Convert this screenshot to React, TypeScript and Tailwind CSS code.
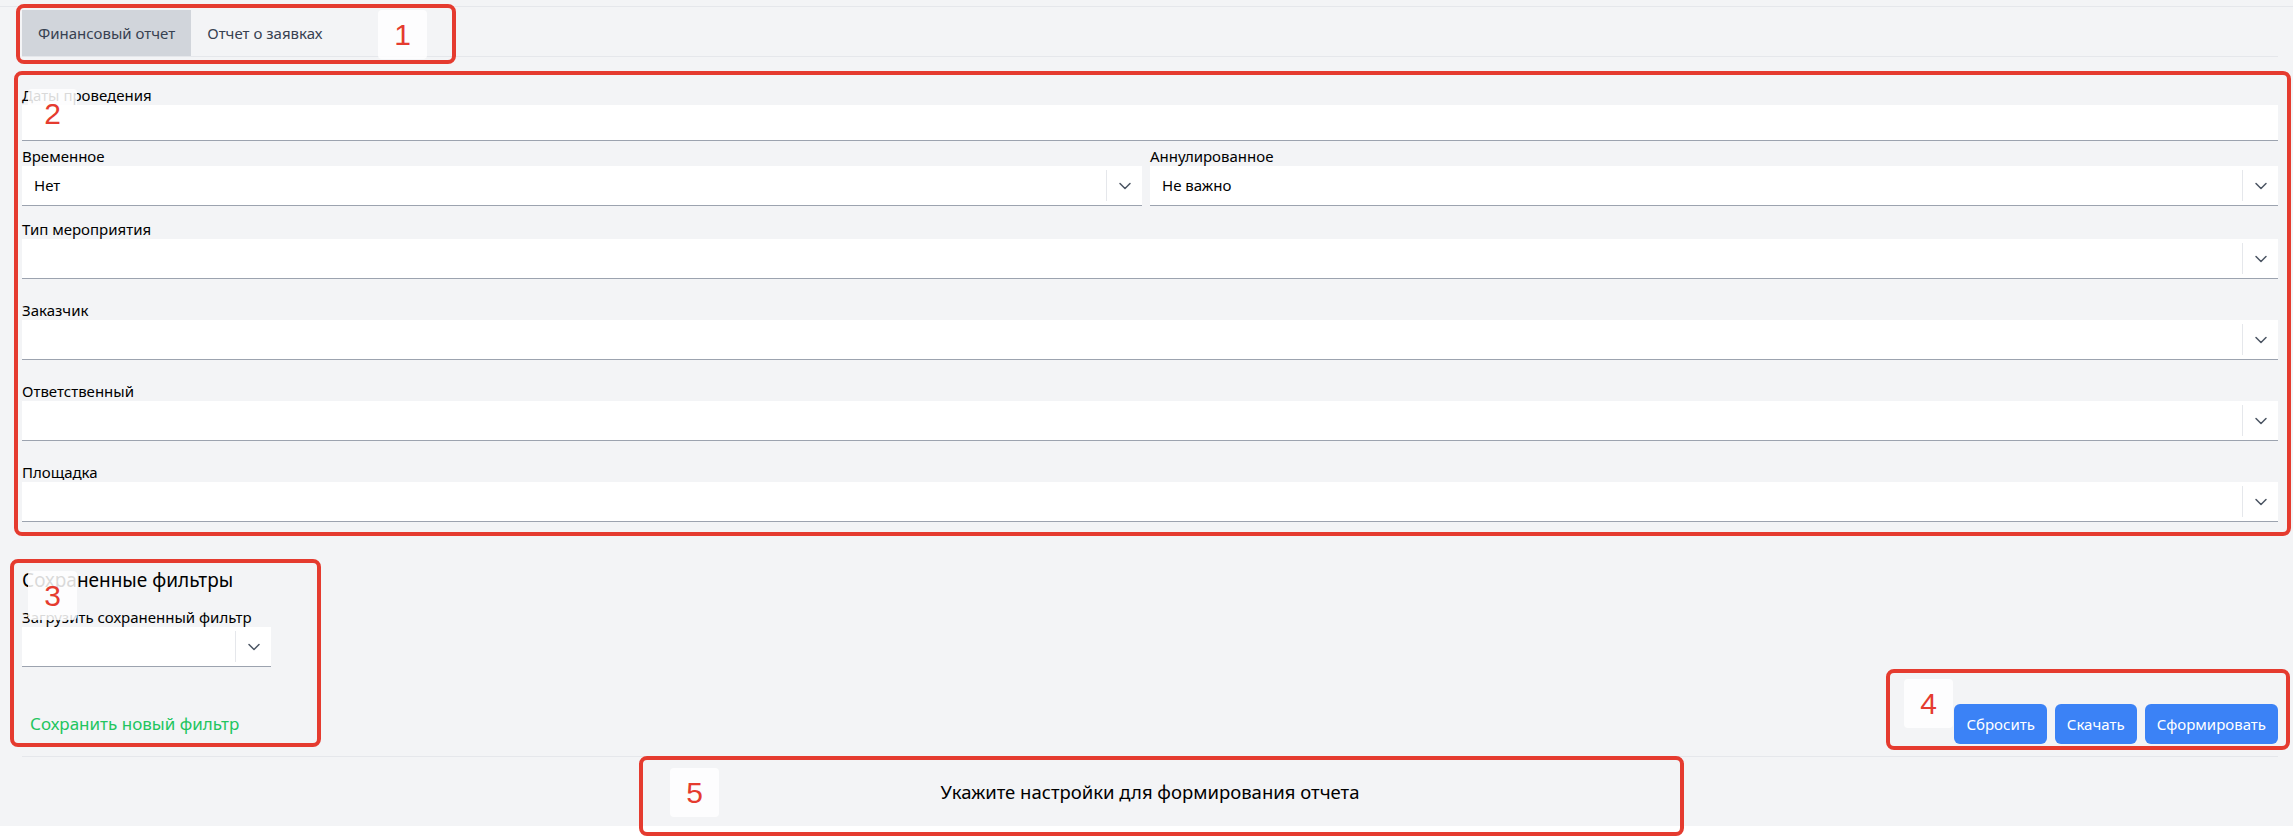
import React from 'react';
import { ChevronDown } from 'lucide-react';

const Select = ({ value, className = '' }: { value?: string; className?: string }) => (
  <div className={`h-10 bg-white border-b border-[#9ca3af] flex items-stretch ${className}`}>
    <div className="flex-1 flex items-center px-3 text-[15px] text-black truncate">{value}</div>
    <div className="flex items-center py-1">
      <div className="w-px h-full bg-[#e5e7eb]" />
    </div>
    <div className="w-[35px] flex items-center justify-center text-[#4b5563]">
      <ChevronDown size={20} strokeWidth={1.8} />
    </div>
  </div>
);

const Label = ({ children }: { children: React.ReactNode }) => (
  <div className="h-5 leading-5 text-[15px] text-black">{children}</div>
);

const Marker = ({ n, className }: { n: string; className: string }) => (
  <div
    className={`absolute w-[49px] h-[49px] bg-white/85 rounded-sm flex items-center justify-center text-[#e53b2f] text-[30px] ${className}`}
    style={{ fontFamily: '"Liberation Sans", Arial, sans-serif' }}
  >
    {n}
  </div>
);

export default function App() {
  return (
    <div className="relative min-h-screen bg-white" style={{ fontFamily: '"Noto Sans", "Open Sans", sans-serif' }}>
      <div className="bg-[#f3f4f6]">
        <div className="h-[7px] border-b border-[#e5e7eb]" />

        <div className="pl-[22px] pr-[15px]">
          {/* tabs */}
          <div className="mt-[3px] flex border-b border-[#e5e7eb]">
            <button className="h-[46px] px-4 bg-[#d1d5db] text-[15px] text-[#374151]">Финансовый отчет</button>
            <button className="h-[46px] px-4 text-[15px] text-[#374151]">Отчет о заявках</button>
          </div>

          {/* filters */}
          <div className="pt-[28px]">
            <Label>Даты проведения</Label>
            <div className="h-9 bg-white border-b border-[#9ca3af]" />

            <div className="mt-[5px] grid grid-cols-[1120px_1fr] gap-2">
              <div>
                <Label>Временное</Label>
                <Select value="Нет" />
              </div>
              <div>
                <Label>Аннулированное</Label>
                <Select value="Не важно" />
              </div>
            </div>

            <div className="mt-[13px]">
              <Label>Тип мероприятия</Label>
              <Select />
            </div>
            <div className="mt-[21px]">
              <Label>Заказчик</Label>
              <Select />
            </div>
            <div className="mt-[21px]">
              <Label>Ответственный</Label>
              <Select />
            </div>
            <div className="mt-[21px]">
              <Label>Площадка</Label>
              <Select />
            </div>
          </div>

          {/* saved filters + actions */}
          <div className="mt-[44px] flex items-end justify-between">
            <div>
              <div className="h-7 leading-7 text-[19px] text-black">Сохраненные фильтры</div>
              <div className="mt-[13px]">
                <Label>Загрузить сохраненный фильтр</Label>
                <Select className="w-[249px]" />
              </div>
              <button className="mt-[37px] h-10 px-2 text-[17px] text-[#22c55e]">Сохранить новый фильтр</button>
            </div>
            <div className="flex gap-2">
              <button className="h-10 px-3 rounded-md bg-[#3b82f6] text-white text-[15px]">Сбросить</button>
              <button className="h-10 px-3 rounded-md bg-[#3b82f6] text-white text-[15px]">Скачать</button>
              <button className="h-10 px-3 rounded-md bg-[#3b82f6] text-white text-[15px]">Сформировать</button>
            </div>
          </div>

          <div className="mt-3 border-t border-[#e5e7eb] h-[70px] flex items-center justify-center text-[18.5px] text-black">
            Укажите настройки для формирования отчета
          </div>
        </div>
      </div>

      {/* annotation boxes */}
      <div className="absolute left-[16px] top-[4px] w-[440px] h-[60px] border-4 border-[#e53b2f] rounded-lg pointer-events-none" />
      <Marker n="1" className="left-[378px] top-[10px]" />

      <div className="absolute left-[14px] top-[71px] w-[2277px] h-[465px] border-4 border-[#e53b2f] rounded-lg pointer-events-none" />
      <Marker n="2" className="left-[28px] top-[89px]" />

      <div className="absolute left-[10px] top-[559px] w-[311px] h-[188px] border-4 border-[#e53b2f] rounded-lg pointer-events-none" />
      <Marker n="3" className="left-[28px] top-[571px]" />

      <div className="absolute left-[1886px] top-[669px] w-[404px] h-[81px] border-4 border-[#e53b2f] rounded-lg pointer-events-none" />
      <Marker n="4" className="left-[1904px] top-[679px]" />

      <div className="absolute left-[639px] top-[756px] w-[1045px] h-[80px] border-4 border-[#e53b2f] rounded-lg pointer-events-none" />
      <Marker n="5" className="left-[670px] top-[768px]" />
    </div>
  );
}
